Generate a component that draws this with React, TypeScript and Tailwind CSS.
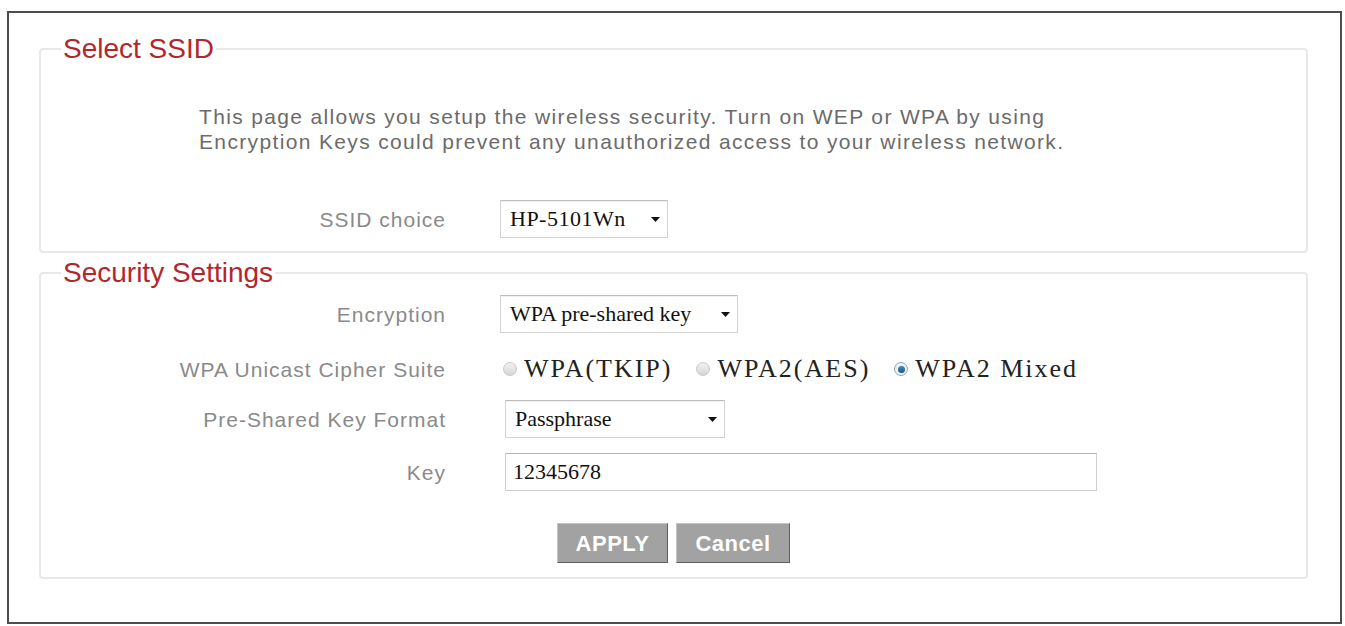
import React from "react";

const sans = "font-['Liberation_Sans',Arial,sans-serif]";
const serif = "font-['Liberation_Serif','Times_New_Roman',serif]";

function Caret() {
  return (
    <svg width="9" height="5" viewBox="0 0 9 5" className="shrink-0">
      <path d="M0 0 L9 0 L4.5 5 Z" fill="#111" />
    </svg>
  );
}

function FakeSelect({ value, width, textClass = "" }: { value: string; width: string; textClass?: string }) {
  return (
    <div
      className={`flex h-[38px] items-center justify-between border border-[#d4d4d4] border-t-[#bdbdbd] bg-white pl-[9px] pr-[7px] shadow-[inset_0_1px_1px_rgba(0,0,0,0.06)] ${width}`}
    >
      <span className={`${serif} text-[22px] leading-none text-[#111] ${textClass}`}>{value}</span>
      <Caret />
    </div>
  );
}

function Radio({ checked, label }: { checked?: boolean; label: string }) {
  return (
    <label className="flex items-center gap-[7px]">
      <span
        className={`flex h-[14px] w-[14px] items-center justify-center rounded-full border ${
          checked ? "border-[#8ea7b6] bg-[#e9f1f5]" : "border-[#c9c9c9] bg-gradient-to-b from-[#f2f2f2] to-[#d6d6d6]"
        }`}
      >
        {checked && <span className="h-[7px] w-[7px] rounded-full bg-gradient-to-b from-[#3f8db5] to-[#1f5a7a]" />}
      </span>
      <span className={`${serif} text-[26px] leading-none tracking-[2px] text-[#222]`}>{label}</span>
    </label>
  );
}

function Row({ label, children, className = "" }: { label: string; children: React.ReactNode; className?: string }) {
  return (
    <div className={`flex items-center ${className}`}>
      <div className={`${sans} w-[405px] text-right text-[21px] leading-none tracking-[1px] text-[#8a8a8a]`}>{label}</div>
      <div className="ml-[54px] flex items-center">{children}</div>
    </div>
  );
}

export default function App() {
  return (
    <div className="h-[626px] w-[1345px] overflow-hidden bg-white pl-[7px] pt-[11px]">
      <div className="h-[613px] w-[1335px] border-2 border-[#4d4d4d] px-[30px] pt-[21px]">
        <fieldset className="w-[1269px] rounded-[4px] border-2 border-[#e8e8e8] pb-[13px]">
          <legend className={`${sans} ml-[20px] px-[2px] text-[28px] leading-[30px] text-[#b3262c]`}>Select SSID</legend>
          <p className={`${sans} mt-[40px] pl-[158px] text-[21px] leading-[25px] tracking-[1.35px] text-[#6b6b6b]`}>
            This page allows you setup the wireless security. Turn on WEP or WPA by using
            <br />
            Encryption Keys could prevent any unauthorized access to your wireless network.
          </p>
          <Row label="SSID choice" className="mt-[46px]">
            <FakeSelect value="HP-5101Wn" width="w-[168px]" textClass="tracking-[0.5px]" />
          </Row>
        </fieldset>

        <fieldset className="mt-[5px] w-[1269px] rounded-[4px] border-2 border-[#e8e8e8] pb-[14px]">
          <legend className={`${sans} ml-[20px] px-[2px] text-[28px] leading-[30px] text-[#b3262c]`}>Security Settings</legend>
          <Row label="Encryption" className="mt-[7px]">
            <FakeSelect value="WPA pre-shared key" width="w-[238px]" />
          </Row>
          <Row label="WPA Unicast Cipher Suite" className="mt-[17px] h-[38px]">
            <div className="ml-[3px] flex items-center gap-[24px]">
              <Radio label="WPA(TKIP)" />
              <Radio label="WPA2(AES)" />
              <Radio checked label="WPA2 Mixed" />
            </div>
          </Row>
          <Row label="Pre-Shared Key Format" className="mt-[12px]">
            <div className="ml-[5px]">
              <FakeSelect value="Passphrase" width="w-[220px]" />
            </div>
          </Row>
          <Row label="Key" className="mt-[15px]">
            <div className={`${serif} ml-[5px] flex h-[38px] w-[592px] items-center border border-[#cfcfcf] border-t-[#b5b5b5] bg-white pl-[7px] text-[22px] leading-none text-[#111]`}>
              12345678
            </div>
          </Row>
          <div className="mt-[32px] flex gap-[8px] pl-[516px]">
            <button className={`${sans} h-[40px] w-[111px] border border-[#c4c4c4] border-b-[#5e5e5e] border-r-[#5e5e5e] bg-[#a2a2a2] text-[22px] font-bold tracking-[0.5px] text-white`}>
              APPLY
            </button>
            <button className={`${sans} h-[40px] w-[114px] border border-[#c4c4c4] border-b-[#5e5e5e] border-r-[#5e5e5e] bg-[#a2a2a2] text-[22px] font-bold tracking-[0.5px] text-white`}>
              Cancel
            </button>
          </div>
        </fieldset>
      </div>
    </div>
  );
}
